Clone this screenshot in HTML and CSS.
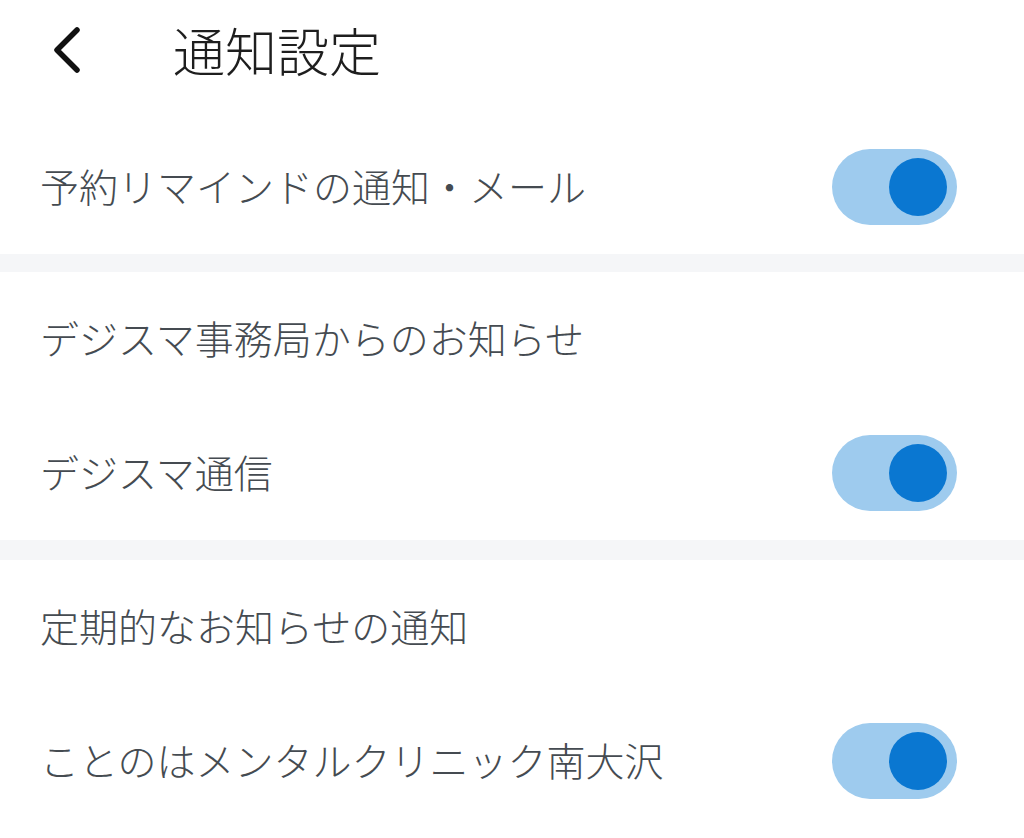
FILE: index.html
```html
<!DOCTYPE html>
<html lang="ja">
<head>
<meta charset="utf-8">
<title>通知設定</title>
<link rel="stylesheet" href="styles.css">
</head>
<body>
<header class="header">
  <button class="back" aria-label="戻る">
    <svg width="34" height="50" viewBox="0 0 34 50"><path d="M27 5 L7 25 L27 45" fill="none" stroke="#111" stroke-width="5.5" stroke-linecap="round" stroke-linejoin="round"/></svg>
  </button>
  <h1 class="title">通知設定</h1>
</header>
<section class="section">
  <div class="row">
    <span class="label">予約リマインドの通知・メール</span>
    <span class="toggle"><span class="knob"></span></span>
  </div>
</section>
<div class="band"></div>
<section class="section">
  <div class="row"><span class="label">デジスマ事務局からのお知らせ</span></div>
  <div class="row">
    <span class="label">デジスマ通信</span>
    <span class="toggle"><span class="knob"></span></span>
  </div>
</section>
<div class="band band-2"></div>
<section class="section">
  <div class="row"><span class="label">定期的なお知らせの通知</span></div>
  <div class="row">
    <span class="label">ことのはメンタルクリニック南大沢</span>
    <span class="toggle"><span class="knob"></span></span>
  </div>
</section>
</body>
</html>
```
FILE: styles.css
```css
html, body {
  margin: 0;
  padding: 0;
  background: #fff;
}
body {
  font-family: "Noto Sans CJK JP", "Noto Sans", sans-serif;
  width: 1024px;
  height: 838px;
  overflow: hidden;
}
.header {
  height: 120px;
  display: flex;
  align-items: center;
  padding-bottom: 20px;
  box-sizing: border-box;
}
.back {
  border: 0;
  background: none;
  padding: 0;
  margin-left: 50px;
  width: 34px;
  height: 50px;
  display: flex;
}
.title {
  margin: 0 0 0 89px;
  font-size: 52px;
  font-weight: 300;
  color: #1e1e1e;
  line-height: 1;
  letter-spacing: 0;
}
.row {
  height: 134px;
  display: flex;
  align-items: center;
  justify-content: space-between;
  padding: 0 67px 0 40px;
}
.label {
  font-size: 39px;
  font-weight: 300;
  color: #454b51;
  line-height: 1;
  margin-top: -3px;
}
.band {
  height: 18px;
  background: #f5f6f8;
}
.band-2 {
  height: 20px;
}
.toggle {
  width: 125px;
  height: 76px;
  border-radius: 38px;
  background: #9ecbee;
  display: flex;
  align-items: center;
  justify-content: flex-end;
  padding-right: 10px;
  box-sizing: border-box;
}
.knob {
  width: 58px;
  height: 58px;
  border-radius: 50%;
  background: #0a77d1;
}
```
